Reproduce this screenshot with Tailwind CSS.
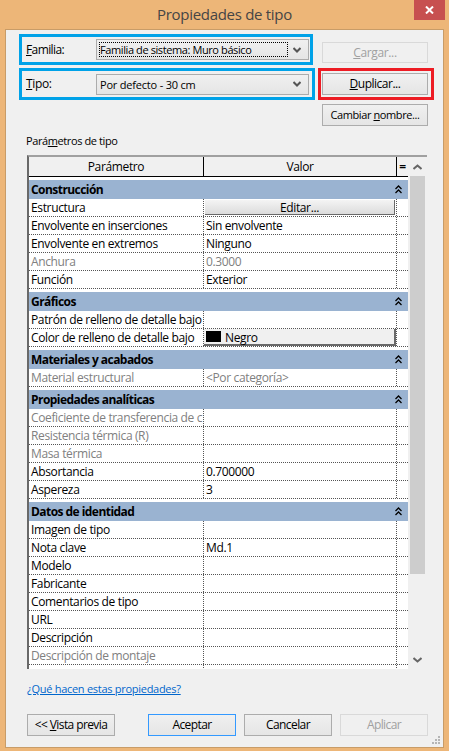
<!DOCTYPE html>
<html lang="es">
<head>
  <meta charset="UTF-8">
  <title>Propiedades de tipo</title>
  <script src="https://cdn.jsdelivr.net/npm/@tailwindcss/browser@4"></script>
</head>
<body class="w-[449px] h-[751px] overflow-hidden bg-[#edb678] font-['Open_Sans',sans-serif] text-[12px] tracking-[-0.36px] text-black">
  <div class="h-[751px] px-[5px] pb-[3px] flex flex-col">
    <!-- title bar -->
    <div class="h-[29px] shrink-0 flex relative">
      <div class="flex-1 pt-[4px] text-center text-[15px] leading-[20px] tracking-[-0.3px] text-[#454545]">Propiedades de tipo</div>
      <div class="absolute right-[-1px] top-0 w-[31px] h-[20px] bg-[#c75050] flex items-center justify-center">
        <svg width="9" height="8" viewBox="0 0 9 8"><path d="M1 0.5 L8 7.5 M8 0.5 L1 7.5" stroke="#fff" stroke-width="2"/></svg>
      </div>
    </div>

    <!-- client area -->
    <div class="flex-1 bg-[#f0f0f0] border border-[#c89c68] relative flex flex-col">
      <!-- top controls -->
      <div class="flex pl-[13px] pt-[4px] h-[100px]">
        <div class="w-[296px] shrink-0 flex flex-col gap-[3px]">
          <div class="w-[294px] h-[31px] border-[3px] border-[#00a2e8] flex items-center">
            <span class="w-[74px] pl-[4px] tracking-[-0.6px]"><u>F</u>amilia:</span>
            <div class="w-[213px] h-[21px] border border-[#acacac] bg-gradient-to-b from-[#f0f0f0] to-[#e5e5e5] flex items-center p-[2px]">
              <div class="flex-1 h-[15px] border border-dotted border-black flex items-center leading-[13px] text-[11px] tracking-[-0.4px] text-[#000]">Familia de sistema: Muro básico</div>
              <svg class="mx-[5px]" width="8" height="6" viewBox="0 0 8 6"><path d="M0.5 1 L4 4.5 L7.5 1" fill="none" stroke="#555" stroke-width="2"/></svg>
            </div>
          </div>
          <div class="w-[296px] h-[32px] border-[3px] border-[#00a2e8] flex items-center">
            <span class="w-[74px] pl-[4px]"><u>T</u>ipo:</span>
            <div class="w-[213px] h-[21px] border border-[#acacac] bg-gradient-to-b from-[#f0f0f0] to-[#e5e5e5] flex items-center p-[2px]">
              <div class="flex-1 h-[15px] border border-transparent flex items-center leading-[13px] text-[11px] tracking-[-0.2px]">Por defecto - 30 cm</div>
              <svg class="mx-[5px]" width="8" height="6" viewBox="0 0 8 6"><path d="M0.5 1 L4 4.5 L7.5 1" fill="none" stroke="#555" stroke-width="2"/></svg>
            </div>
          </div>
        </div>
        <div class="ml-[3px] w-[116px] flex flex-col">
          <div class="mt-[8px] ml-[4px] w-[106px] h-[21px] border border-[#d9d9d9] flex items-center justify-center text-[#a0a0a0]"><span><u>C</u>argar...</span></div>
          <div class="mt-[5px] h-[32px] border-[3px] border-[#ed1c24] flex items-center pl-[1px]">
            <div class="w-[106px] h-[22px] border border-[#acacac] bg-gradient-to-b from-[#f0f0f0] to-[#e5e5e5] flex items-center justify-center tracking-[-0.5px]"><span><u>D</u>uplicar...</span></div>
          </div>
          <div class="mt-[4px] ml-[4px] w-[106px] h-[22px] border border-[#acacac] bg-gradient-to-b from-[#f0f0f0] to-[#e5e5e5] flex items-center justify-center text-[11px] tracking-[-0.4px]"><span>Cambiar <u>n</u>ombre...</span></div>
        </div>
      </div>

      <div class="pl-[20px] mt-[2px] h-[17px] leading-[17px] text-[11px] tracking-[-0.4px]">Pará<u>m</u>etros de tipo</div>

      <!-- table -->
      <div class="mx-[21px] mt-[6px] h-[514px] w-[400px] border-t-2 border-l-2 border-[#a0a0a0] border-l-[#696969] flex overflow-hidden">
        <div class="w-[379px] shrink-0 bg-white">
          <div class="h-[19px] flex bg-[#f0f0f0] border-b border-black text-center leading-[19px] items-stretch box-content">
            <div class="w-[175px] shrink-0 border-r border-black">Parámetro</div>
            <div class="w-[193px] shrink-0 border-r border-black">Valor</div>
            <div class="flex-1 font-bold">=</div>
          </div>
          <div id="rows"></div>
        </div>
        <!-- scrollbar -->
        <div class="flex-1 bg-[#f0f0f0] flex flex-col items-center">
          <svg class="mt-[7px] mb-[6px]" width="9" height="6" viewBox="0 0 9 6"><path d="M0.5 5 L4.5 1.5 L8.5 5" fill="none" stroke="#666" stroke-width="2"/></svg>
          <div class="w-[15px] h-[398px] bg-[#cdcdcd]"></div>
          <div class="flex-1"></div>
          <svg class="mb-[6px]" width="9" height="6" viewBox="0 0 9 6"><path d="M0.5 1 L4.5 4.5 L8.5 1" fill="none" stroke="#666" stroke-width="2"/></svg>
        </div>
      </div>

      <a class="ml-[21px] mt-[11px] h-[17px] leading-[17px] text-[11px] tracking-[-0.28px] text-[#0066cc] underline">¿Qué hacen estas propiedades?</a>

      <!-- footer buttons -->
      <div class="flex ml-[21px] mt-[17px] tracking-[-0.6px]">
        <div class="w-[88px] h-[22px] border border-[#acacac] bg-gradient-to-b from-[#f0f0f0] to-[#e5e5e5] flex items-center justify-center"><span>&lt;&lt; <u>V</u>ista previa</span></div>
        <div class="ml-[33px] w-[88px] h-[22px] border border-[#3399ff] bg-gradient-to-b from-[#f0f0f0] to-[#e5e5e5] flex items-center justify-center">Aceptar</div>
        <div class="ml-[8px] w-[88px] h-[22px] border border-[#acacac] bg-gradient-to-b from-[#f0f0f0] to-[#e5e5e5] flex items-center justify-center">Cancelar</div>
        <div class="ml-[8px] w-[88px] h-[22px] border border-[#d9d9d9] flex items-center justify-center text-[#a0a0a0]">Aplicar</div>
      </div>

      <!-- resize grip -->
      <svg class="absolute right-[2px] bottom-[2px]" width="9" height="9" viewBox="0 0 9 9" fill="#b5b5b5">
        <rect x="6" y="0" width="2" height="2"/><rect x="3" y="3" width="2" height="2"/><rect x="6" y="3" width="2" height="2"/>
        <rect x="0" y="6" width="2" height="2"/><rect x="3" y="6" width="2" height="2"/><rect x="6" y="6" width="2" height="2"/>
      </svg>
    </div>
  </div>

  <script>
    const groups = [
      ['Construcción', [['Estructura', 'btn:Editar...'], ['Envolvente en inserciones', 'Sin envolvente'], ['Envolvente en extremos', 'Ninguno'], ['Anchura', '0.3000', 1], ['Función', 'Exterior']]],
      ['Gráficos', [['Patrón de relleno de detalle bajo', ''], ['Color de relleno de detalle bajo', 'color:Negro']]],
      ['Materiales y acabados', [['Material estructural', '<Por categoría>', 1]]],
      ['Propiedades analíticas', [['Coeficiente de transferencia de c', '', 1], ['Resistencia térmica (R)', '', 1], ['Masa térmica', '', 1], ['Absortancia', '0.700000'], ['Aspereza', '3']]],
      ['Datos de identidad', [['Imagen de tipo', ''], ['Nota clave', 'Md.1'], ['Modelo', ''], ['Fabricante', ''], ['Comentarios de tipo', ''], ['URL', ''], ['Descripción', ''], ['Descripción de montaje', '', 1], ['', '']]]
    ];
    const rowsEl = document.getElementById('rows');

    function el(cls, text) {
      const d = document.createElement('div');
      d.className = cls;
      if (text) d.textContent = text;
      return d;
    }

    groups.forEach(([name, rows], i) => {
      const head = el('h-[19px] mt-[3px] bg-[#9ab3d1] flex items-center justify-between pl-[2px] pr-[6px] font-bold tracking-[-0.55px] leading-[19px]');
      head.appendChild(el('', name));
      head.insertAdjacentHTML('beforeend', '<svg width="7" height="9" viewBox="0 0 7 9"><path d="M0.5 4 L3.5 1 L6.5 4 M0.5 8 L3.5 5 L6.5 8" fill="none" stroke="#000" stroke-width="1.3"/></svg>');
      rowsEl.appendChild(head);

      rows.forEach(([label, value, muted]) => {
        const color = muted ? 'text-[#808080]' : 'text-black';
        const row = el('h-[18px] flex leading-[17px] border-b border-dotted border-[#555] ' + color);
        row.appendChild(el('w-[175px] shrink-0 pl-[2px] overflow-hidden whitespace-nowrap border-r border-dotted border-[#555]', label));
        const cell = el('w-[193px] shrink-0 pl-[2px] overflow-hidden whitespace-nowrap border-r border-dotted border-[#555]');
        if (value.startsWith('btn:')) {
          cell.className = 'w-[193px] shrink-0 border-r border-dotted border-[#555] p-[1px]';
          cell.appendChild(el('h-[15px] border-b border-r border-[#696969] bg-gradient-to-b from-[#f4f4f4] to-[#dcdcdc] text-center leading-[15px]', value.slice(4)));
        } else if (value.startsWith('color:')) {
          cell.className = 'w-[193px] shrink-0 border-r border-dotted border-[#555]';
          const b = el('h-[17px] border-b-2 border-r-2 border-[#696969] bg-[#f0f0f0] flex items-center pl-[2px] gap-[4px]');
          b.appendChild(el('w-[15px] h-[11px] bg-black'));
          b.appendChild(el('pt-[1px]', value.slice(6)));
          cell.appendChild(b);
        } else {
          cell.textContent = value;
        }
        row.appendChild(cell);
        row.appendChild(el('flex-1'));
        rowsEl.appendChild(row);
      });
    });
  </script>
</body>
</html>
